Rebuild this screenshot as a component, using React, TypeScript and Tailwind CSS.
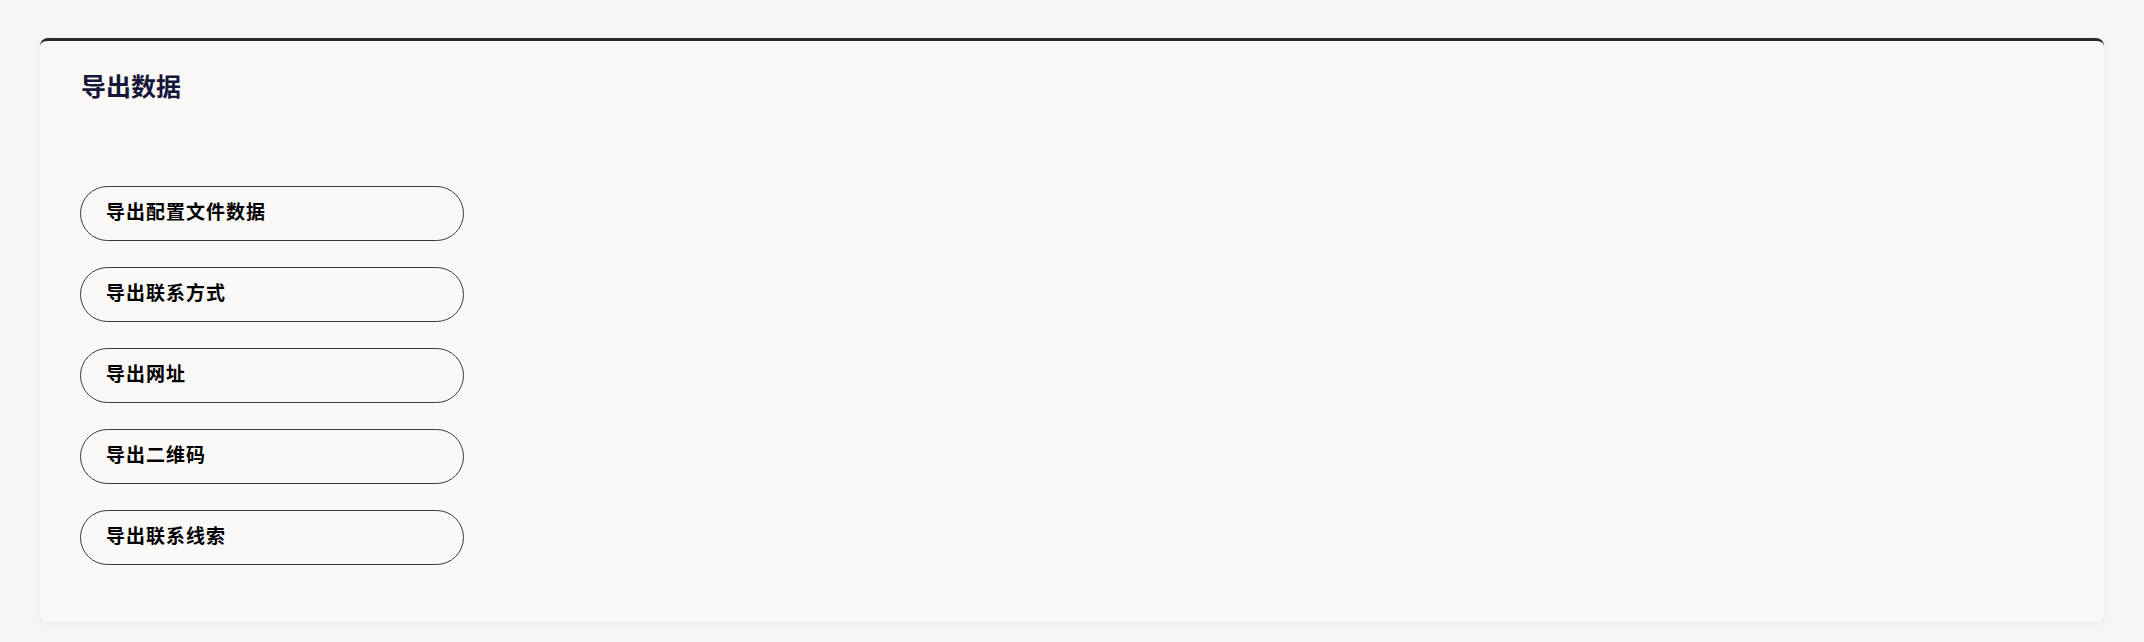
const exportItems = ['导出配置文件数据', '导出联系方式', '导出网址', '导出二维码', '导出联系线索'];

export default function App() {
  return (
    <div className="min-h-[642px] bg-[#f7f6f4] px-[40px] pt-[38px] pb-[19px] font-['Inter','Noto_Sans_CJK_SC',sans-serif]">
      <div className="rounded-lg border-t-[3px] border-[#2b2b2b] bg-[#faf9f7] px-[40px] pt-[28px] pb-[57px] shadow-[0_2px_10px_rgba(0,0,0,0.05)]">
        {/* Header */}
        <h2 className="pl-px text-[25px] font-bold text-[#16163a]">导出数据</h2>

        {/* Export buttons */}
        <div className="mt-[79px] flex flex-col gap-[26px]">
          {exportItems.map((label) => (
            <button
              key={label}
              className="flex h-[55px] w-[384px] items-center rounded-full border border-[#3a3a3a] bg-transparent pl-[25px] text-left text-[19px] font-bold tracking-[1px] text-black"
            >
              {label}
            </button>
          ))}
        </div>
      </div>
    </div>
  );
}
